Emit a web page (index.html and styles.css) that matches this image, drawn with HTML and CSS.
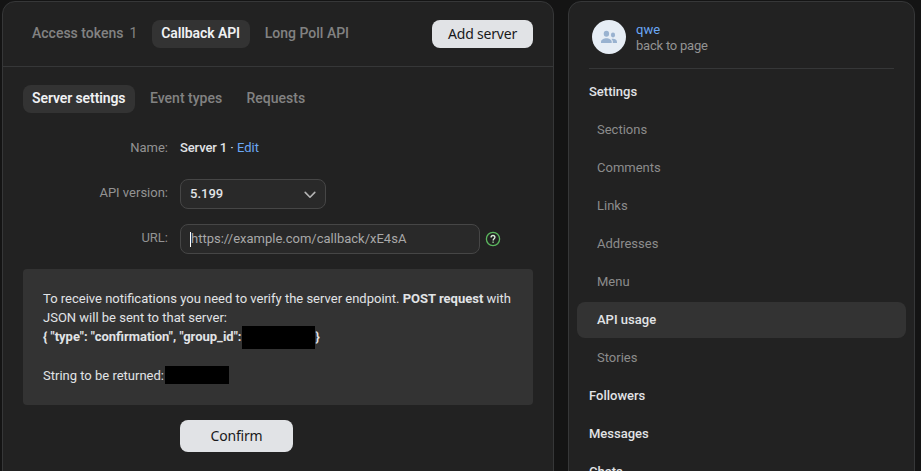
FILE: index.html
```html
<!DOCTYPE html>
<html lang="en">
<head>
<meta charset="utf-8">
<title>API usage</title>
<link rel="stylesheet" href="styles.css">
</head>
<body>
<div class="layout">
  <main class="panel main">
    <header class="head">
      <nav class="tabs">
        <a class="tab">Access tokens<span class="count">1</span></a>
        <a class="tab active tab-callback">Callback API</a>
        <a class="tab tab-poll">Long Poll API</a>
      </nav>
      <button class="button add">Add server</button>
    </header>
    <nav class="tabs subtabs">
      <a class="tab active tab-settings">Server settings</a>
      <a class="tab tab-events">Event types</a>
      <a class="tab">Requests</a>
    </nav>
    <div class="form">
      <div class="row row-name"><span class="label">Name:</span><span class="value"><span class="server">Server 1</span> · <a class="link">Edit</a></span></div>
      <div class="row"><span class="label">API version:</span>
        <div class="field select"><span>5.199</span>
          <svg width="12" height="8" viewBox="0 0 12 8"><path d="M1.2 1.4 6 6.2l4.8-4.8" fill="none" stroke="#b4b4b4" stroke-width="1.6" stroke-linecap="round" stroke-linejoin="round"/></svg>
        </div>
      </div>
      <div class="row"><span class="label">URL:</span>
        <div class="field url"><i class="caret"></i><span>https://example.com/callback/xE4sA</span></div>
        <svg class="help" width="16" height="16" viewBox="0 0 16 16"><circle cx="8" cy="8" r="6.6" fill="none" stroke="#5cb85f" stroke-width="1.3"/><path d="M6.1 6.4C6.1 5.1 6.9 4.5 8 4.500s1.900.7 1.900 1.800c0 1.500-1.700 1.500-1.700 3.100" fill="none" stroke="#d8ead8" stroke-width="1.400"/><rect x="7.400" y="10.500" width="1.400" height="1.400" fill="#9ad49b"/></svg>
      </div>
    </div>
    <section class="notice">
      <p>To receive notifications you need to verify the server endpoint. <b>POST request</b> with<br>JSON will be sent to that server:</p>
      <p class="code"><b>{ "type": "confirmation", "group_id":</b><span class="mask mask-id"></span><b>}</b></p>
      <p class="returned">String to be returned:<span class="mask mask-string"></span></p>
    </section>
    <button class="button confirm">Confirm</button>
  </main>
  <aside class="panel side">
    <div class="owner">
      <span class="avatar"><svg width="18" height="14" viewBox="0 0 18 14"><g fill="#99b2d0"><ellipse cx="6.4" cy="3.7" rx="2.7" ry="3"/><path d="M1 13v-1.200C1 9.500 4 8.200 6.400 8.200s5.300 1.300 5.300 3.600V13z"/><ellipse cx="13" cy="5" rx="2.1" ry="2.4"/><path d="M12.800 13h4.200v-1c0-2-2.100-3.200-4.100-3.200-.6 0-1.100.1-1.600.3 1 .7 1.500 1.700 1.500 2.700z"/></g></svg></span>
      <div class="who"><a class="link">qwe</a><span class="back">back to page</span></div>
    </div>
    <nav class="menu">
      <a class="item top">Settings</a>
      <a class="item">Sections</a>
      <a class="item">Comments</a>
      <a class="item">Links</a>
      <a class="item">Addresses</a>
      <a class="item">Menu</a>
      <a class="item current">API usage</a>
      <a class="item">Stories</a>
      <a class="item top">Followers</a>
      <a class="item top">Messages</a>
      <a class="item top">Chats</a>
    </nav>
  </aside>
</div>
</body>
</html>
```
FILE: styles.css
```css
* { box-sizing: border-box; }
body {
  margin: 0;
  height: 471px;
  overflow: hidden;
  background: #141414;
  color: #e1e3e6;
  font: 13px/19px Roboto, "Liberation Sans", sans-serif;
}
.layout { display: flex; gap: 14px; align-items: flex-start; height: 471px; overflow: hidden; padding: 1px 0 0 2px; }
.panel { height: 520px; background: #222; border: 1px solid #363738; border-radius: 13px; }
.main { width: 552px; }
.side { width: 347px; padding: 0 8px; }
.link { color: #6ba8f5; }

.head { display: flex; justify-content: space-between; align-items: flex-start; height: 65px; padding: 18px 20px 0; border-bottom: 1px solid #363738; }
.tabs { display: flex; }
.tab { height: 28px; padding: 0 9px; border-radius: 8px; color: #828282; font-size: 14px; font-weight: 500; line-height: 27px; white-space: nowrap; }
.tab.active { background: #333; color: #f0f1f3; font-weight: 600; letter-spacing: -0.1px; }
.count { margin-left: 6px; font-weight: 400; }
.tab-callback { width: 98px; margin-left: 6px; }
.tab-poll { margin-left: 5.5px; }
.subtabs { padding: 18px 20px 0; }
.tab-settings { width: 112px; }
.tab-events { width: 90.5px; margin: 0 6px; }

.button { display: block; padding: 0; border: 0; border-radius: 8px; background: #e1e3e6; color: #19191a; font: 400 14px/28px "Noto Sans", sans-serif; letter-spacing: -0.2px; text-align: center; }
.add { width: 101px; height: 28px; }
.confirm { width: 113px; height: 32px; margin: 15px 0 0 177px; line-height: 32px; }

.form { padding-top: 19px; }
.row { display: flex; align-items: center; height: 30px; margin-bottom: 15px; }
.row-name { margin-bottom: 17px; }
.label { width: 165px; margin-right: 12px; color: #939393; text-align: right; position: relative; top: -2px; }
.row-name .label { top: 0; }
.server { font-weight: 500; letter-spacing: -0.12px; }
.field { display: flex; align-items: center; height: 30px; padding: 0 9px; border: 1px solid #464646; border-radius: 8px; background: #292929; }
.select { justify-content: space-between; width: 146px; font-weight: 500; }
.select span, .url span { margin-top: -2px; }
.select svg { margin-top: 2px; }
.url { width: 300px; color: #a8a8a8; }
.caret { width: 1px; height: 15px; background: #fff; }
.help { margin-left: 4.5px; }

.notice { height: 136px; margin: 0 20px; padding: 20px; border-radius: 4px; background: #333; white-space: nowrap; }
.notice p { margin: 0; }
.code, .returned { display: flex; align-items: center; height: 19px; }
.notice .returned { margin-top: 20px; }
.mask { flex: none; background: #000; }
.mask-id { width: 73px; height: 23px; margin-left: 1px; position: relative; top: 1px; }
.mask-string { width: 64px; height: 18px; margin-left: 1px; position: relative; top: -1px; }

.owner { display: flex; align-items: flex-start; height: 67px; margin: 0 12px; padding: 18px 0 0 3px; border-bottom: 1px solid #363738; }
.avatar { display: flex; align-items: center; justify-content: center; width: 34px; height: 34px; border-radius: 50%; background: #e6edf5; }
.who { display: flex; flex-direction: column; margin-left: 10px; padding-top: 2px; line-height: 16px; color: #939393; }
.back { letter-spacing: -0.22px; }
.menu { display: flex; flex-direction: column; gap: 2px; padding-top: 5px; }
.item { height: 36px; padding-left: 20px; border-radius: 8px; color: #8c8c8c; line-height: 36px; }
.item.top { padding-left: 12px; color: #e1e3e6; font-weight: 500; }
.item.current { background: #333; color: #e1e3e6; font-weight: 500; }
```
